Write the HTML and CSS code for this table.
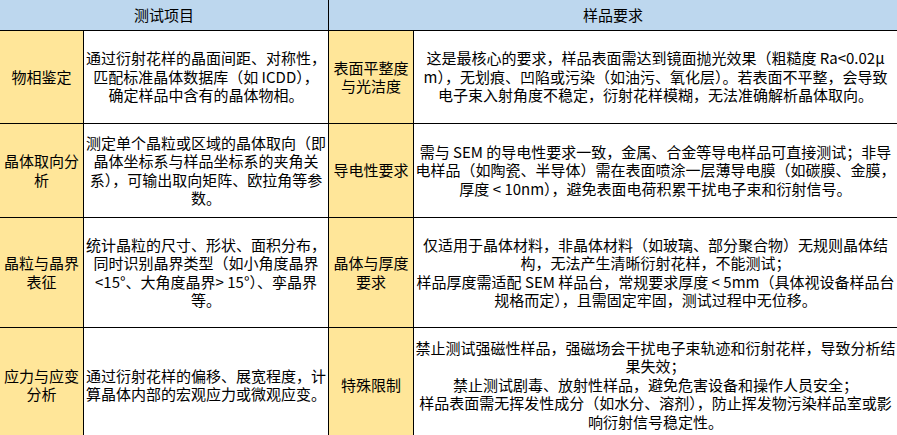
FILE: index.html
```html
<!DOCTYPE html>
<html lang="zh-CN">
<head>
<meta charset="utf-8">
<title>测试项目与样品要求</title>
<link rel="stylesheet" href="styles.css">
</head>
<body>
<div class="sheet">
  <div class="cell head span-left">测试项目</div>
  <div class="cell head span-right">样品要求</div>

  <div class="cell item">物相鉴定</div>
  <div class="cell desc">通过衍射花样的晶面间距、对称性，<br>匹配标准晶体数据库（如 ICDD），<br>确定样品中含有的晶体物相。</div>
  <div class="cell item">表面平整度<br>与光洁度</div>
  <div class="cell req">这是最核心的要求，样品表面需达到镜面抛光效果（粗糙度 Ra&lt;0.02μ<br>m），无划痕、凹陷或污染（如油污、氧化层）。若表面不平整，会导致<br>电子束入射角度不稳定，衍射花样模糊，无法准确解析晶体取向。</div>

  <div class="cell item">晶体取向分<br>析</div>
  <div class="cell desc">测定单个晶粒或区域的晶体取向（即<br>晶体坐标系与样品坐标系的夹角关<br>系），可输出取向矩阵、欧拉角等参<br>数。</div>
  <div class="cell item">导电性要求</div>
  <div class="cell req">需与 SEM 的导电性要求一致，金属、合金等导电样品可直接测试；非导<br>电样品（如陶瓷、半导体）需在表面喷涂一层薄导电膜（如碳膜、金膜，<br>厚度 &lt; 10nm），避免表面电荷积累干扰电子束和衍射信号。</div>

  <div class="cell item">晶粒与晶界<br>表征</div>
  <div class="cell desc">统计晶粒的尺寸、形状、面积分布，<br>同时识别晶界类型（如小角度晶界<br>&lt;15°、大角度晶界&gt; 15°）、孪晶界<br>等。</div>
  <div class="cell item">晶体与厚度<br>要求</div>
  <div class="cell req">仅适用于晶体材料，非晶体材料（如玻璃、部分聚合物）无规则晶体结<br>构，无法产生清晰衍射花样，不能测试；<br>样品厚度需适配 SEM 样品台，常规要求厚度 &lt; 5mm（具体视设备样品台<br>规格而定），且需固定牢固，测试过程中无位移。</div>

  <div class="cell item">应力与应变<br>分析</div>
  <div class="cell desc">通过衍射花样的偏移、展宽程度，计<br>算晶体内部的宏观应力或微观应变。</div>
  <div class="cell item">特殊限制</div>
  <div class="cell req">禁止测试强磁性样品，强磁场会干扰电子束轨迹和衍射花样，导致分析结<br>果失效；<br>禁止测试剧毒、放射性样品，避免危害设备和操作人员安全；<br>样品表面需无挥发性成分（如水分、溶剂），防止挥发物污染样品室或影<br>响衍射信号稳定性。</div>
</div>
</body>
</html>
```

FILE: styles.css
```css
html, body {
  margin: 0;
  padding: 0;
  background: #ffffff;
}

body {
  width: 897px;
  height: 435px;
  overflow: hidden;
  font-family: "Noto Sans CJK SC", "Liberation Sans", sans-serif;
  font-size: 15px;
  line-height: 18.5px;
  color: #000000;
}

.sheet {
  display: grid;
  grid-template-columns: 83px 244px 84px 483px;
  grid-template-rows: 30px 92px 93px 109px 114px;
  gap: 1px;
  background: #000000;
  width: 897px;
}

.cell {
  display: flex;
  align-items: center;
  justify-content: center;
  text-align: center;
  white-space: nowrap;
  overflow: visible;
  background: #ffffff;
}

.head {
  background: #bdd7ee;
}

.span-left {
  grid-column: 1 / 3;
}

.span-right {
  grid-column: 3 / 5;
}

.item {
  background: #ffe699;
}

.desc {
  background: #ffffff;
}

.req {
  background: #ffffff;
}
```
